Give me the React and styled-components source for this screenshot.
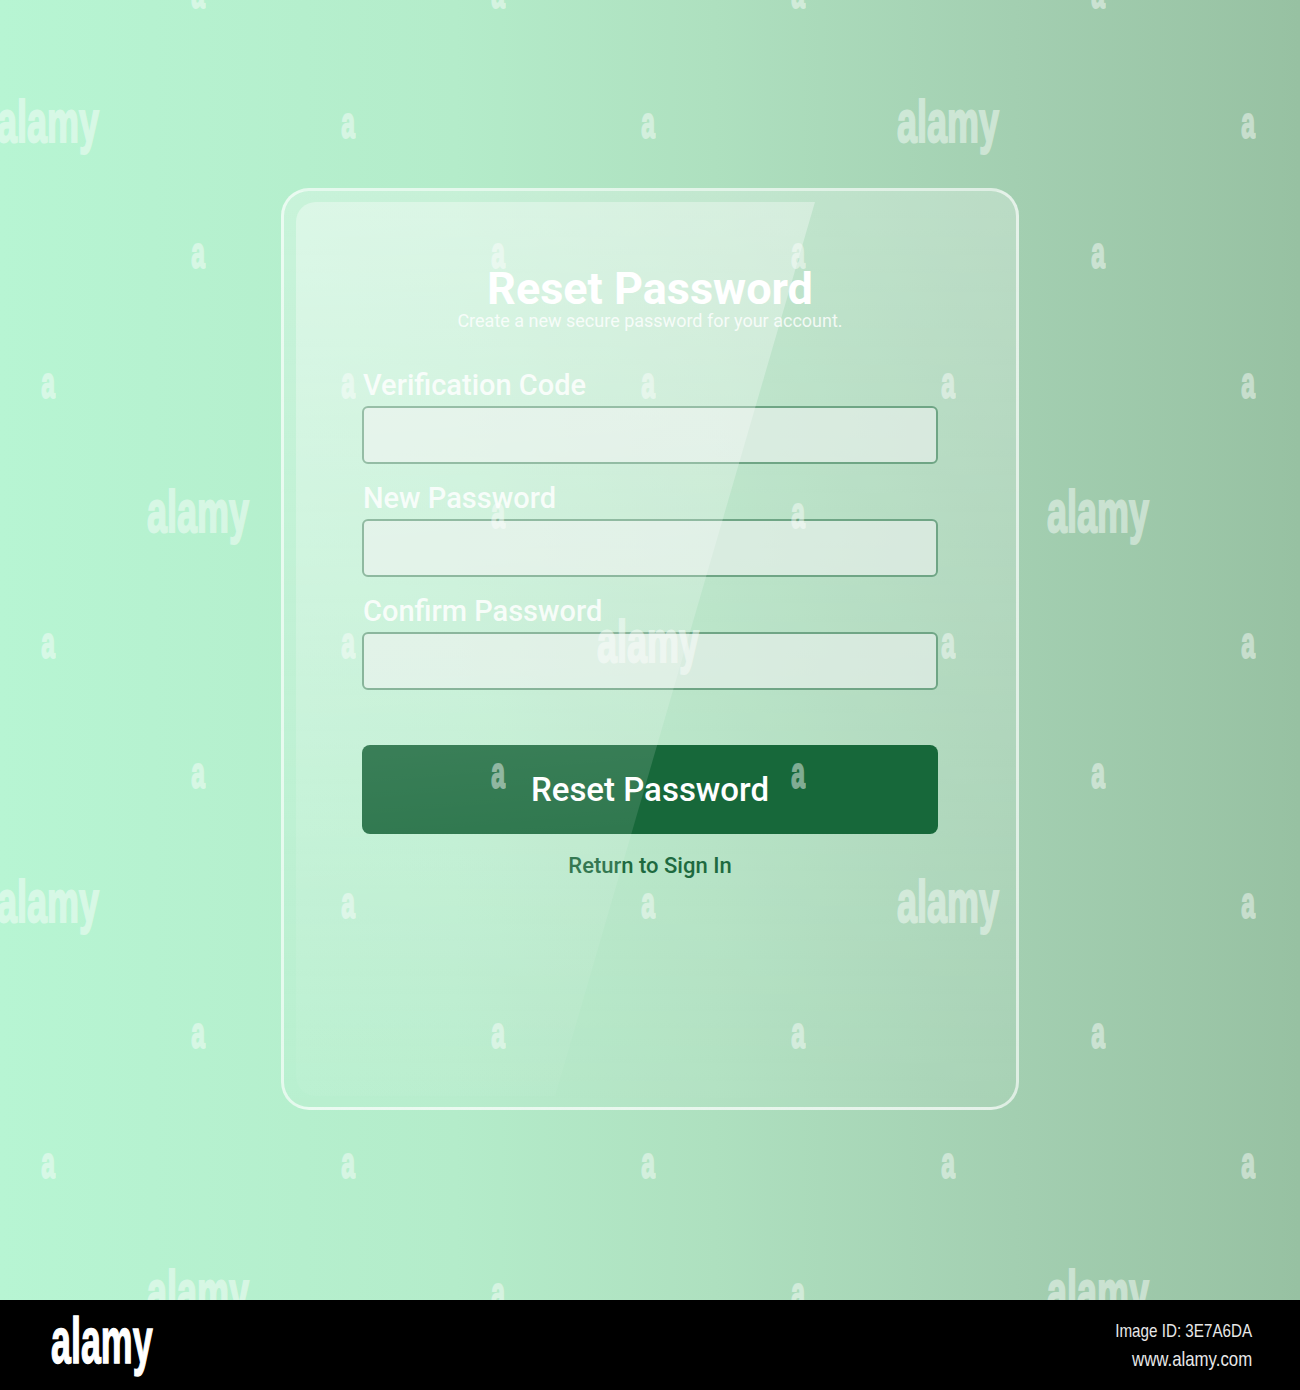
import React from "react"
import styled, { createGlobalStyle } from "styled-components"

const Global = createGlobalStyle`
  html, body {
    margin: 0;
    padding: 0;
    background: #000;
  }
  * { box-sizing: border-box; }
`;

const Page = styled.div`
  width: 1300px;
  height: 1390px;
  display: flex;
  flex-direction: column;
  font-family: Roboto, "Liberation Sans", sans-serif;
  overflow: hidden;
`;

const Stage = styled.div`
  position: relative;
  width: 1300px;
  height: 1300px;
  padding-top: 188px;
  display: flex;
  justify-content: center;
  align-items: flex-start;
  background: linear-gradient(90deg, #b7f5d3 0%, #b4ecca 35%, #aee0bf 55%, #a3cfb1 78%, #97c1a2 100%);
  overflow: hidden;
`;

const Card = styled.div`
  position: relative;
  width: 738px;
  height: 922px;
  border: 3px solid rgba(255, 255, 255, 0.62);
  border-radius: 28px;
  background: linear-gradient(180deg, rgba(255, 255, 255, 0.26) 0%, rgba(255, 255, 255, 0.14) 60%, rgba(255, 255, 255, 0.06) 100%);
  padding: 75px 78px 0;
  display: flex;
  flex-direction: column;
`;

const Gloss = styled.div`
  position: absolute;
  left: 12px;
  top: 11px;
  right: 12px;
  bottom: 11px;
  border-radius: 20px;
  background: linear-gradient(175deg, rgba(255, 255, 255, 0.36) 0%, rgba(255, 255, 255, 0.2) 45%, rgba(255, 255, 255, 0.1) 70%, rgba(255, 255, 255, 0.02) 100%);
  clip-path: polygon(0 0, 73.3% 0, 36.6% 100%, 0 100%);
  pointer-events: none;
  z-index: 2;
`;

const Title = styled.h1`
  margin: 0;
  font-size: 45px;
  line-height: 46px;
  font-weight: 700;
  color: #ffffff;
  text-align: center;
`;

const Subtitle = styled.p`
  margin: -2px 0 0;
  font-size: 18px;
  line-height: 22px;
  color: rgba(255, 255, 255, 0.82);
  text-align: center;
`;

const Form = styled.div`
  display: flex;
  flex-direction: column;
  margin-top: 37px;
`;

const Field = styled.label`
  display: flex;
  flex-direction: column;
  gap: 5px;
  margin-bottom: ${p => (p.last ? "0" : "18px")};
`;

const Label = styled.span`
  font-size: 29px;
  line-height: 32px;
  font-weight: 500;
  color: rgba(255, 255, 255, 0.85);
  padding-left: 1px;
`;

const Input = styled.input`
  height: 58px;
  width: 100%;
  border: 2px solid #6fa585;
  border-radius: 6px;
  background: rgba(232, 240, 235, 0.66);
  outline: none;
  font-family: inherit;
  font-size: 18px;
  padding: 0 14px;
`;

const Button = styled.button`
  margin-top: 55px;
  height: 89px;
  width: 100%;
  border: none;
  border-radius: 8px;
  background: #17683a;
  color: #ffffff;
  font-family: inherit;
  font-size: 33px;
  font-weight: 500;
  cursor: pointer;
`;

const Link = styled.a`
  margin-top: 19px;
  align-self: center;
  font-size: 22px;
  line-height: 26px;
  font-weight: 500;
  color: #1e6a3f;
  text-decoration: none;
  cursor: pointer;
`;

const Marks = styled.div`
  position: absolute;
  inset: 0;
  pointer-events: none;
  z-index: 3;
`;

const Mark = styled.span`
  position: absolute;
  font-family: "Liberation Sans", Arial, sans-serif;
  font-weight: 700;
  font-size: ${p => (p.big ? "60px" : "44px")};
  line-height: 1;
  color: #ffffff;
  -webkit-text-stroke: 2px #ffffff;
  opacity: 0.45;
  white-space: nowrap;
  transform: translate(-50%, -58%) scaleX(${p => (p.big ? 0.6 : 0.56)});
`;

const Footer = styled.div`
  height: 90px;
  background: #000;
  display: flex;
  align-items: center;
  justify-content: space-between;
  padding: 0 48px 0 51px;
`;

const Logo = styled.span`
  font-family: "Liberation Sans", Arial, sans-serif;
  font-weight: 700;
  font-size: 64px;
  line-height: 1;
  color: #ffffff;
  -webkit-text-stroke: 1.5px #ffffff;
  display: inline-block;
  transform: scaleX(0.56);
  transform-origin: left center;
  margin-top: -8px;
`;

const Credits = styled.div`
  display: flex;
  flex-direction: column;
  align-items: flex-end;
  gap: 8px;
  color: #e8e8e8;
  font-family: "Liberation Sans", Arial, sans-serif;
`;

const CreditLine = styled.span`
  display: inline-block;
  font-size: ${p => p.size}px;
  line-height: 1;
  transform: scaleX(0.8);
  transform-origin: right center;
`;

const bigSpots = ["1-48", "1-948", "4-198", "4-1098", "5-648", "7-48", "7-948", "10-198", "10-1098"];

const marks = [];
for (let i = 0; i <= 10; i++) {
  const y = -3 + 130 * i;
  const start = i % 2 === 0 ? 198 : 48;
  for (let x = start; x < 1300; x += 300) {
    marks.push({ x, y, big: bigSpots.includes(`${i}-${x}`) });
  }
}

export default function App() {
  return (
    <Page>
      <Global />
      <Stage>
        <Card>
          <Title>Reset Password</Title>
          <Subtitle>Create a new secure password for your account.</Subtitle>
          <Form>
            <Field>
              <Label>Verification Code</Label>
              <Input type="text" />
            </Field>
            <Field>
              <Label>New Password</Label>
              <Input type="password" />
            </Field>
            <Field last>
              <Label>Confirm Password</Label>
              <Input type="password" />
            </Field>
            <Button>Reset Password</Button>
            <Link>Return to Sign In</Link>
          </Form>
          <Gloss />
        </Card>
        <Marks>
          {marks.map(m => (
            <Mark key={`${m.x}-${m.y}`} big={m.big} style={{ left: m.x, top: m.y }}>
              {m.big ? "alamy" : "a"}
            </Mark>
          ))}
        </Marks>
      </Stage>
      <Footer>
        <Logo>alamy</Logo>
        <Credits>
          <CreditLine size={19}>Image ID: 3E7A6DA</CreditLine>
          <CreditLine size={21}>www.alamy.com</CreditLine>
        </Credits>
      </Footer>
    </Page>
  )
}
